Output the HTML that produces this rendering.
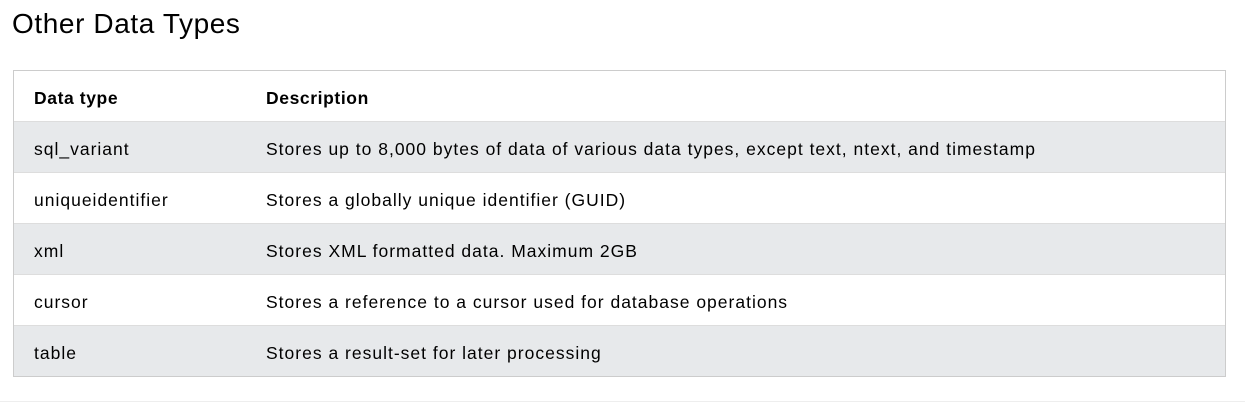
<!DOCTYPE html>
<html><head><style>
body{margin:0;background:#fff;font-family:"Liberation Sans",sans-serif;color:#000;width:1245px;height:409px;overflow:hidden;position:relative}
h2{position:absolute;left:12px;top:6px;margin:0;font-weight:normal;font-size:28px;line-height:36px;letter-spacing:0.6px}
.t{position:absolute;left:13px;top:70px;width:1211px;border:1px solid #ccc;}
.r{height:50px;border-bottom:1px solid #ddd;position:relative;font-size:17.5px;line-height:54px;letter-spacing:1px}
.r:last-child{border-bottom:none}
.r.g{background:#e7e9eb}
.r span{position:absolute;left:20px}
.r span+span{left:252px}
.h{font-weight:bold;letter-spacing:0.6px}
hr{position:absolute;left:0;top:401px;width:1245px;margin:0;border:0;border-top:1px solid #eee}
</style></head><body>
<h2>Other Data Types</h2>
<div class="t">
<div class="r h"><span>Data type</span><span>Description</span></div>
<div class="r g"><span>sql_variant</span><span>Stores up to 8,000 bytes of data of various data types, except text, ntext, and timestamp</span></div>
<div class="r"><span>uniqueidentifier</span><span>Stores a globally unique identifier (GUID)</span></div>
<div class="r g"><span>xml</span><span>Stores XML formatted data. Maximum 2GB</span></div>
<div class="r"><span>cursor</span><span>Stores a reference to a cursor used for database operations</span></div>
<div class="r g"><span>table</span><span>Stores a result-set for later processing</span></div>
</div>
<hr>
</body></html>
